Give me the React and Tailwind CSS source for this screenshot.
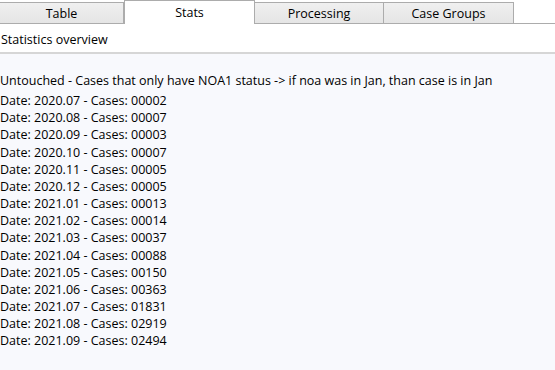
import React from 'react';

const tabs = [
  { label: 'Table', width: 'w-[124px]' },
  { label: 'Stats', width: 'w-[131px]', active: true },
  { label: 'Processing', width: 'w-[129px]' },
  { label: 'Case Groups', width: 'w-[130px]' },
];

const rows = [
  ['2020.07', '00002'],
  ['2020.08', '00007'],
  ['2020.09', '00003'],
  ['2020.10', '00007'],
  ['2020.11', '00005'],
  ['2020.12', '00005'],
  ['2021.01', '00013'],
  ['2021.02', '00014'],
  ['2021.03', '00037'],
  ['2021.04', '00088'],
  ['2021.05', '00150'],
  ['2021.06', '00363'],
  ['2021.07', '01831'],
  ['2021.08', '02919'],
  ['2021.09', '02494'],
];

const App = () => {
  return (
    <div className="w-[555px] h-[370px] flex flex-col bg-white text-black text-[12.5px] overflow-hidden" style={{ fontFamily: '"Segoe UI", "Open Sans", sans-serif' }}>
      <div className="flex h-6 shrink-0">
        {tabs.map((t) =>
          t.active ? (
            <div key={t.label} className={`${t.width} h-6 bg-white border-l border-t border-r border-[#acacac] flex items-center justify-center pt-[1px]`}>
              {t.label}
            </div>
          ) : (
            <div
              key={t.label}
              className={`${t.width} h-[22px] mt-[2px] bg-gradient-to-b from-[#f0f0f0] to-[#e5e5e5] border-t border-b border-r border-[#acacac] flex items-center justify-center pt-[2px]`}
            >
              {t.label}
            </div>
          )
        )}
        <div className="flex-1 border-b border-[#acacac]" />
      </div>
      <div className="h-[30px] shrink-0 flex items-center pl-[1px] pt-[5px] border-b-2 border-[#d6d6d6]">
        Statistics overview
      </div>
      <div className="flex-1 bg-[#f8f9fd] pt-[18px] leading-[17.15px]">
        <div className="mb-[3px]">Untouched - Cases that only have NOA1 status -&gt; if noa was in Jan, than case is in Jan</div>
        {rows.map(([d, c]) => (
          <div key={d}>
            Date: {d} - Cases: {c}
          </div>
        ))}
      </div>
    </div>
  );
};

export default App;
